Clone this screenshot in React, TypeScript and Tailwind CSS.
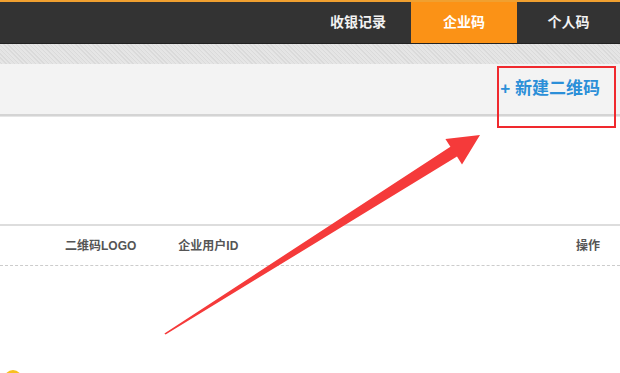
export default function App() {
  const font = { fontFamily: '"Liberation Sans", "Noto Sans CJK SC", sans-serif' };
  return (
    <div className="relative w-[620px] h-[373px] overflow-hidden bg-white" style={font}>
      {/* top nav */}
      <div className="h-[2px] bg-[#f0a030]" />
      <div className="flex h-[41px] justify-end bg-[#333333] pl-px">
        <div className="flex w-[106px] items-center justify-center text-[14px] font-bold text-[#f2f2f2]">收银记录</div>
        <div className="flex w-[106px] items-center justify-center bg-[#fb9216] text-[14px] font-bold text-white">企业码</div>
        <div className="flex w-[103px] items-center justify-center text-[14px] font-bold text-[#f2f2f2]">个人码</div>
      </div>
      <div className="h-px bg-[#222]" />

      {/* textured band */}
      <div className="h-[20px] bg-[#e0e0e0] bg-[repeating-linear-gradient(45deg,#e4e4e4_0px,#e4e4e4_1px,#dadada_1px,#dadada_2px,#e6e6e6_2px,#e6e6e6_3px)]" />

      {/* toolbar */}
      <div className="flex h-[50px] items-center justify-end bg-[#f3f3f3] pr-[20px]">
        <span className="text-[17px] font-bold text-[#2b8fd8]">+ 新建二维码</span>
      </div>
      <div className="h-[2px] bg-[#d4d4d4]" />
      <div className="h-px bg-[#e6e6e6]" />

      {/* table header */}
      <div className="mt-[107px] h-[2px] bg-[#dddddd]" />
      <div className="flex h-[40px] items-center border-b border-dashed border-[#cccccc] text-[12px] font-bold text-[#555]">
        <span className="ml-[65px]">二维码LOGO</span>
        <span className="ml-[42px]">企业用户ID</span>
        <span className="ml-auto mr-[20px]">操作</span>
      </div>

      {/* yellow dot partially visible */}
      <div className="absolute left-[4px] top-[370px] h-[18px] w-[18px] rounded-full bg-[#f8c020]" />

      {/* red highlight box */}
      <div className="absolute left-[497px] top-[66px] h-[62px] w-[119px] border-2 border-[#f0292e]" />

      {/* red arrow */}
      <svg className="absolute left-0 top-0" width="620" height="373" viewBox="0 0 620 373">
        <polygon
          points="164.4,333.4 450.4,146.8 445.4,138.9 480,135 462,164.5 457,156.5 165.6,334.6"
          fill="#f53a3a"
        />
      </svg>
    </div>
  );
}
